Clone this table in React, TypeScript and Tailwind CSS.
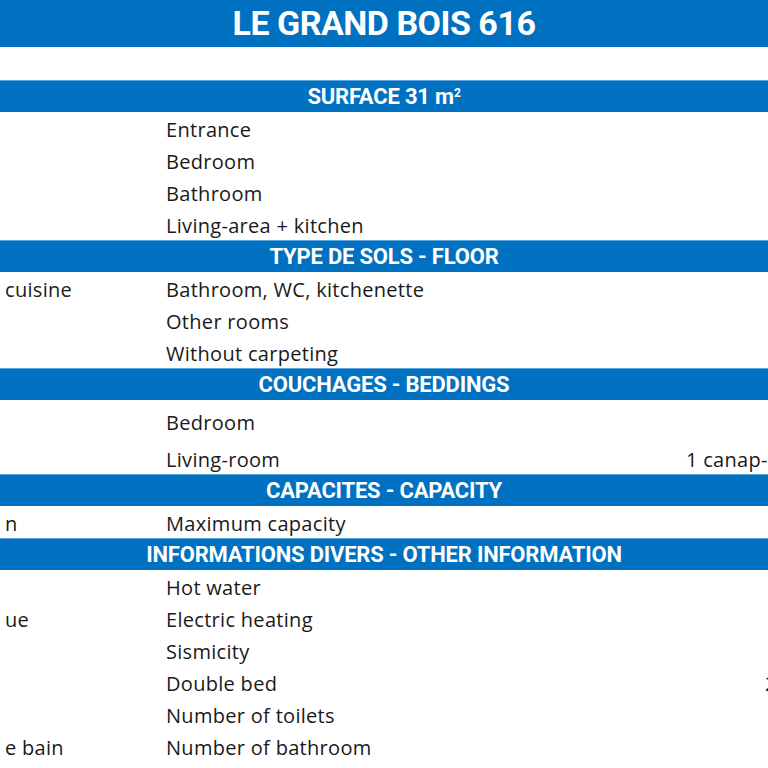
import React from "react";

type Row = { left?: string; label: string; value?: string; valuePad?: string; h?: string };

const sections: { title: React.ReactNode; rows: Row[] }[] = [
  {
    title: (
      <>
        SURFACE 31 m<sup className="text-[12px] relative -top-[4px]">2</sup>
      </>
    ),
    rows: [
      { label: "Entrance" },
      { label: "Bedroom" },
      { label: "Bathroom" },
      { label: "Living-area + kitchen" },
    ],
  },
  {
    title: "TYPE DE SOLS - FLOOR",
    rows: [
      { left: "cuisine", label: "Bathroom, WC, kitchenette" },
      { label: "Other rooms" },
      { label: "Without carpeting" },
    ],
  },
  {
    title: "COUCHAGES - BEDDINGS",
    rows: [
      { label: "Bedroom", h: "h-[42px]" },
      { label: "Living-room", value: "1 canap-lit" },
    ],
  },
  {
    title: "CAPACITES - CAPACITY",
    rows: [{ left: "n", label: "Maximum capacity" }],
  },
  {
    title: "INFORMATIONS DIVERS - OTHER INFORMATION",
    rows: [
      { label: "Hot water" },
      { left: "ue", label: "Electric heating" },
      { label: "Sismicity" },
      { label: "Double bed", value: "2", valuePad: "pl-[79px]" },
      { label: "Number of toilets" },
      { left: "e bain", label: "Number of bathroom" },
    ],
  },
];

function Band({ children }: { children: React.ReactNode }) {
  return (
    <div className="h-[32px] bg-[#0070c0] border-t border-[#5fa8e0] flex items-center justify-center text-white font-bold text-[22px] tracking-[-0.2px] whitespace-nowrap">
      {children}
    </div>
  );
}

function DataRow({ row }: { row: Row }) {
  return (
    <div
      className={`${row.h ?? "h-[32px]"} pt-[3px] grid grid-cols-[166px_520px_1fr] items-center text-[20px] tracking-[0.3px] text-[#1a1a1a] whitespace-nowrap`}
      style={{ fontFamily: '"Open Sans", "Noto Sans", sans-serif' }}
    >
      <div className="pl-[5px] overflow-hidden">{row.left ?? ""}</div>
      <div>{row.label}</div>
      <div className={`${row.valuePad ?? ""} overflow-hidden`}>{row.value ?? ""}</div>
    </div>
  );
}

export default function App() {
  return (
    <div
      className="w-[768px] h-[768px] overflow-hidden bg-white"
      style={{ fontFamily: 'Roboto, "Liberation Sans", sans-serif' }}
    >
      <div className="h-[47px] bg-[#0070c0] flex items-center justify-center text-white font-bold text-[34px] tracking-[-0.5px]">
        LE GRAND BOIS 616
      </div>
      <div className="h-[33px]" />
      {sections.map((s, i) => (
        <div key={i}>
          <Band>{s.title}</Band>
          {s.rows.map((r, j) => (
            <DataRow key={j} row={r} />
          ))}
        </div>
      ))}
    </div>
  );
}
